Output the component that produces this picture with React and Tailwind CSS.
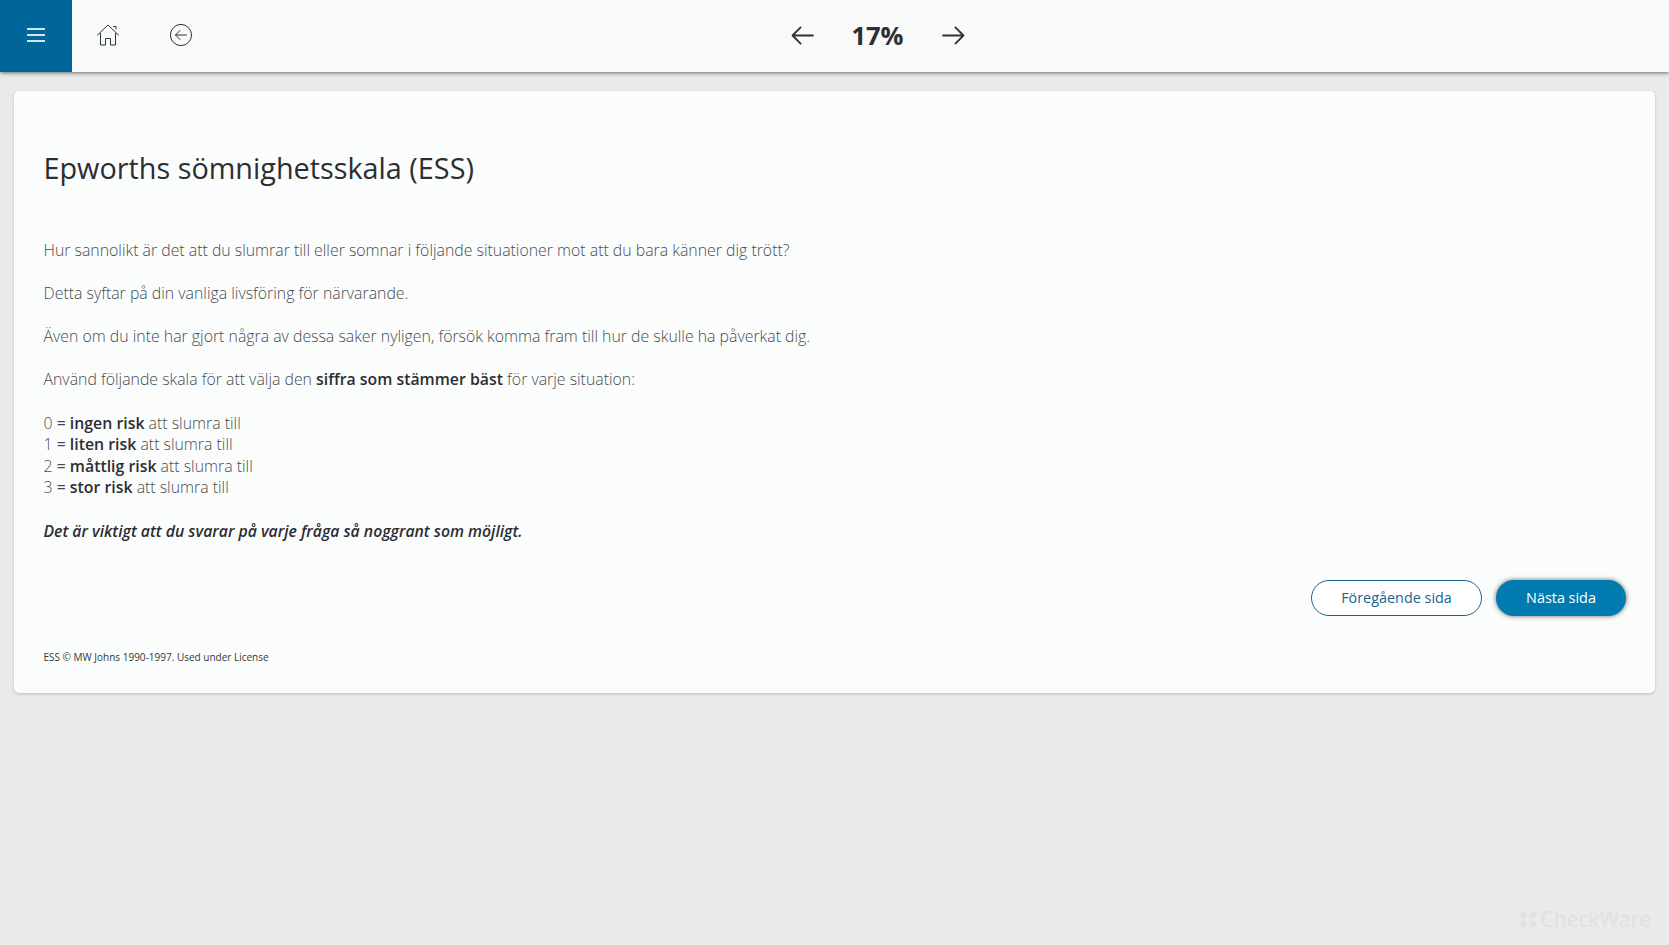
import React from "react";

const Home = () => (
  <svg width="24" height="24" viewBox="0 0 24 24" fill="none" stroke="#2f3338" strokeWidth="1" strokeLinecap="round" strokeLinejoin="round">
    <path d="M1.5 12 L12 2 L22.5 12" />
    <path d="M4.5 10.5 V22 H9.5 V15.5 H14.5 V22 H19.5 V10.5" />
    <path d="M17.5 3.5 H20 V6" />
  </svg>
);

const Back = () => (
  <svg width="24" height="24" viewBox="0 0 24 24" fill="none" stroke="#2f3338" strokeWidth="1" strokeLinecap="round" strokeLinejoin="round">
    <circle cx="12" cy="12" r="10.6" />
    <path d="M17.5 12 H6.5 M11 7.5 L6.5 12 L11 16.5" />
  </svg>
);

const Arrow = ({ flip }) => (
  <svg width="23" height="19" viewBox="0 0 24 20" fill="none" stroke="#2f3338" strokeWidth="1.9" strokeLinecap="round" strokeLinejoin="round" className={flip ? "rotate-180" : ""}>
    <path d="M23 10 H1.5 M10 1.5 L1.5 10 L10 18.5" />
  </svg>
);

const Line = ({ n, b }) => (
  <div>
    {n} <span className="font-normal">=</span> <b className="font-semibold text-[#2b2e32]">{b}</b> att slumra till
  </div>
);

export default function App() {
  return (
    <div className="relative flex h-[945px] flex-col overflow-hidden bg-[#e9eaea] font-['Open_Sans',sans-serif] text-[#2f3338]">
      <header className="relative flex h-[72px] shrink-0 items-center bg-[#f8f9f9] shadow-[0_1px_4px_rgba(0,0,0,0.55)]">
        <div className="flex h-full w-[72px] flex-col items-center justify-center gap-[4px] bg-[#006699] pb-[2px]">
          <span className="h-[2px] w-[18px] bg-[#cfe6f2]" />
          <span className="h-[2px] w-[18px] bg-[#cfe6f2]" />
          <span className="h-[2px] w-[18px] bg-[#cfe6f2]" />
        </div>
        <div className="mb-[2px] ml-[24px] flex"><Home /></div>
        <div className="mb-[2px] ml-[49px] flex"><Back /></div>
        <div className="absolute left-[790.5px] top-0 flex h-full items-center pb-[2px]">
          <Arrow />
          <span className="w-[128px] text-center text-[25.5px] font-bold text-[#2b2e32]">17%</span>
          <Arrow flip />
        </div>
      </header>
      <main className="mx-[14px] mt-[19px] rounded-[5px] bg-[#fbfdfd] pb-[29px] pl-[29.5px] pr-[29px] pt-[56.5px] shadow-[0_1px_3px_rgba(0,0,0,0.2)]">
        <h1 className="text-[28.8px] font-normal leading-[40px] text-[#2b2e32]">Epworths sömnighetsskala (ESS)</h1>
        <div className="mt-[52.5px] text-[15.85px] font-light leading-[21.55px] text-[#474b4f]">
          <p>Hur sannolikt är det att du slumrar till eller somnar i följande situationer mot att du bara känner dig trött?</p>
          <p className="mt-[21.55px]">Detta syftar på din vanliga livsföring för närvarande.</p>
          <p className="mt-[21.55px]">Även om du inte har gjort några av dessa saker nyligen, försök komma fram till hur de skulle ha påverkat dig.</p>
          <p className="mt-[21.55px]">Använd följande skala för att välja den <b className="font-semibold text-[#2b2e32]">siffra som stämmer bäst</b> för varje situation:</p>
          <div className="mt-[22px]">
            <Line n="0" b="ingen risk" />
            <Line n="1" b="liten risk" />
            <Line n="2" b="måttlig risk" />
            <Line n="3" b="stor risk" />
          </div>
          <p className="mt-[22px] text-[15.78px] font-semibold italic text-[#2b2e32]">Det är viktigt att du svarar på varje fråga så noggrant som möjligt.</p>
        </div>
        <div className="mt-[37.5px] flex justify-end gap-[14px]">
          <button className="h-[36px] w-[171px] rounded-full border border-[#17648e] bg-white pb-[1px] text-[14.4px] text-[#17648e]">Föregående sida</button>
          <button className="h-[36px] w-[130px] rounded-full bg-[#007bb0] pb-[1px] text-[14.4px] font-medium text-white shadow-[0_0_5px_rgba(0,0,0,0.6)]">Nästa sida</button>
        </div>
        <div className="mt-[34px] text-[10px] leading-[14px] text-[#33373b]">ESS © MW Johns 1990-1997. Used under License</div>
      </main>
      <div className="absolute bottom-[14px] right-[18px] flex items-center gap-[4px] text-[#dfe1e1]">
        <svg width="17" height="17" viewBox="0 0 17 17" fill="currentColor">
          <rect x="0.5" y="1" width="6" height="6" rx="2" />
          <rect x="10" y="1" width="6" height="6" rx="2" />
          <rect x="0.5" y="10" width="6" height="6" rx="2" />
          <circle cx="13" cy="13" r="3" />
        </svg>
        <span className="text-[21px] leading-[24px]">CheckWare</span>
      </div>
    </div>
  );
}
